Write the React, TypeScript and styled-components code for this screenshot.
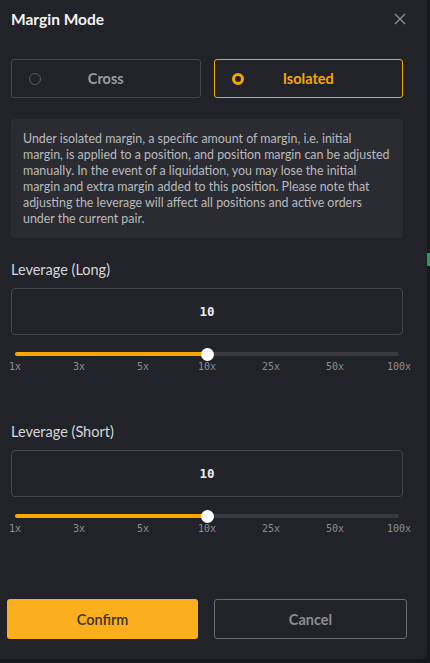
import styled, { createGlobalStyle } from "styled-components";
import { useState } from "react";

const GlobalStyle = createGlobalStyle`
  html, body {
    margin: 0;
    padding: 0;
    background: #17181b;
    font-family: Lato, "Open Sans", sans-serif;
  }
`;

const TICKS = ["1x", "3x", "5x", "10x", "25x", "50x", "100x"];

const INFO_LINES = [
  "Under isolated margin, a specific amount of margin, i.e. initial",
  "margin, is applied to a position, and position margin can be adjusted",
  "manually. In the event of a liquidation, you may lose the initial",
  "margin and extra margin added to this position. Please note that",
  "adjusting the leverage will affect all positions and active orders",
  "under the current pair.",
];

const Leverage = ({ label, value }: { label: string; value: number }) => {
  const [v] = useState(value);
  return (
    <LeverageBlock>
      <FieldLabel>{label}</FieldLabel>
      <ValueBox>{v}</ValueBox>
      <SliderWrap>
        <Track>
          <Fill style={{ width: "50%" }} />
          <Thumb style={{ left: "50%" }} />
        </Track>
      </SliderWrap>
      <Ticks>
        {TICKS.map((t) => (
          <Tick key={t}>
            <span>{t}</span>
          </Tick>
        ))}
      </Ticks>
    </LeverageBlock>
  );
};

export default function App() {
  const [mode, setMode] = useState("isolated");
  return (
    <>
      <GlobalStyle />
      <Page>
        <Modal>
          <Header>
            <Title>Margin Mode</Title>
            <Close>
              <svg width="12" height="12" viewBox="0 0 12 12">
                <path d="M1 1L11 11M11 1L1 11" stroke="#8a8b90" strokeWidth="1.4" />
              </svg>
            </Close>
          </Header>
          <Options>
            <Option $active={mode === "cross"} onClick={() => setMode("cross")}>
              <Radio $active={mode === "cross"} />
              Cross
            </Option>
            <Option $active={mode === "isolated"} onClick={() => setMode("isolated")}>
              <Radio $active={mode === "isolated"} />
              Isolated
            </Option>
          </Options>
          <Info>
            {INFO_LINES.map((l) => (
              <InfoLine key={l}>{l}</InfoLine>
            ))}
          </Info>
          <Leverage label="Leverage (Long)" value={10} />
          <Leverage label="Leverage (Short)" value={10} />
          <Footer>
            <ConfirmBtn>Confirm</ConfirmBtn>
            <CancelBtn>Cancel</CancelBtn>
          </Footer>
        </Modal>
        <Side>
          <SideMark />
        </Side>
      </Page>
    </>
  );
}

const Page = styled.div`
  display: flex;
  width: 430px;
  height: 663px;
`;

const Modal = styled.div`
  width: 427px;
  height: 659px;
  background: #222328;
  border-radius: 0 0 5px 0;
  display: flex;
  flex-direction: column;
  padding: 0 24px 0 11px;
  box-sizing: border-box;
`;

const Side = styled.div`
  flex: 1;
  background: #18191c;
  padding-top: 253px;
`;

const SideMark = styled.div`
  height: 13px;
  background: #1f9d60;
`;

const Header = styled.div`
  height: 38px;
  display: flex;
  align-items: center;
  justify-content: space-between;
`;

const Title = styled.div`
  color: #f2f2f4;
  font-size: 15.5px;
  font-weight: 700;
`;

const Close = styled.div`
  display: flex;
  margin-right: -3px;
  cursor: pointer;
`;

const Options = styled.div`
  margin-top: 21px;
  display: grid;
  grid-template-columns: 1fr 1fr;
  gap: 13px;
`;

const Option = styled.div<{ $active: boolean }>`
  position: relative;
  height: 39px;
  box-sizing: border-box;
  border: 1px solid ${(p) => (p.$active ? "#f7a600" : "#46474c")};
  border-radius: 3px;
  display: flex;
  align-items: center;
  justify-content: center;
  font-size: 14.5px;
  font-weight: 700;
  color: ${(p) => (p.$active ? "#f7a600" : "#9a9ba0")};
  cursor: pointer;
`;

const Radio = styled.span<{ $active: boolean }>`
  position: absolute;
  left: 17px;
  top: 50%;
  margin-top: -6px;
  width: 12px;
  height: 12px;
  box-sizing: border-box;
  border-radius: 50%;
  border: ${(p) => (p.$active ? "3.5px solid #f7a600" : "1px solid #5a5b60")};
  background: ${(p) => (p.$active ? "#222328" : "transparent")};
`;

const Info = styled.div`
  margin-top: 21px;
  height: 119px;
  box-sizing: border-box;
  background: #2b2c31;
  border-radius: 4px;
  padding: 12px 12px;
  color: #b9babe;
  font-size: 12.4px;
  line-height: 16px;
`;

const InfoLine = styled.div`
  white-space: nowrap;
`;

const LeverageBlock = styled.div`
  display: flex;
  flex-direction: column;
  margin-top: 23px;
  & + & {
    margin-top: 50px;
  }
`;

const FieldLabel = styled.div`
  color: #d6d6da;
  font-size: 14.5px;
  line-height: 18px;
`;

const ValueBox = styled.div`
  margin-top: 9px;
  height: 47px;
  box-sizing: border-box;
  border: 1px solid #46474c;
  border-radius: 4px;
  display: flex;
  align-items: center;
  justify-content: center;
  color: #ececef;
  font-family: "DejaVu Sans Mono", "Liberation Mono", monospace;
  font-size: 12.5px;
  font-weight: 700;
`;

const SliderWrap = styled.div`
  margin: 13px 4px 0;
  height: 12px;
  display: flex;
  align-items: center;
`;

const Track = styled.div`
  position: relative;
  flex: 1;
  height: 4px;
  border-radius: 2px;
  background: #3a3b41;
`;

const Fill = styled.div`
  height: 100%;
  border-radius: 2px;
  background: #f7a600;
`;

const Thumb = styled.div`
  position: absolute;
  top: 50%;
  width: 13px;
  height: 13px;
  margin: -6.5px 0 0 -6px;
  border-radius: 50%;
  background: #ffffff;
`;

const Ticks = styled.div`
  margin: 1px 4px 0;
  display: flex;
  justify-content: space-between;
  height: 12px;
`;

const Tick = styled.div`
  width: 0;
  display: flex;
  justify-content: center;
  span {
    color: #8c8d92;
    font-family: "DejaVu Sans Mono", "Liberation Mono", monospace;
    font-size: 10px;
    line-height: 12px;
    white-space: nowrap;
  }
`;

const Footer = styled.div`
  margin-top: 64px;
  margin-left: -4px;
  margin-right: -4px;
  display: grid;
  grid-template-columns: 191px 193px;
  justify-content: space-between;
`;

const ConfirmBtn = styled.button`
  height: 40px;
  border: none;
  border-radius: 3px;
  background: #fcaf1c;
  color: #3b3526;
  font-family: inherit;
  font-size: 14.5px;
  font-weight: 600;
  cursor: pointer;
`;

const CancelBtn = styled.button`
  height: 40px;
  border: 1px solid #6b6c71;
  border-radius: 3px;
  background: transparent;
  color: #8c8d92;
  font-family: inherit;
  font-size: 14.5px;
  font-weight: 700;
  cursor: pointer;
`;
